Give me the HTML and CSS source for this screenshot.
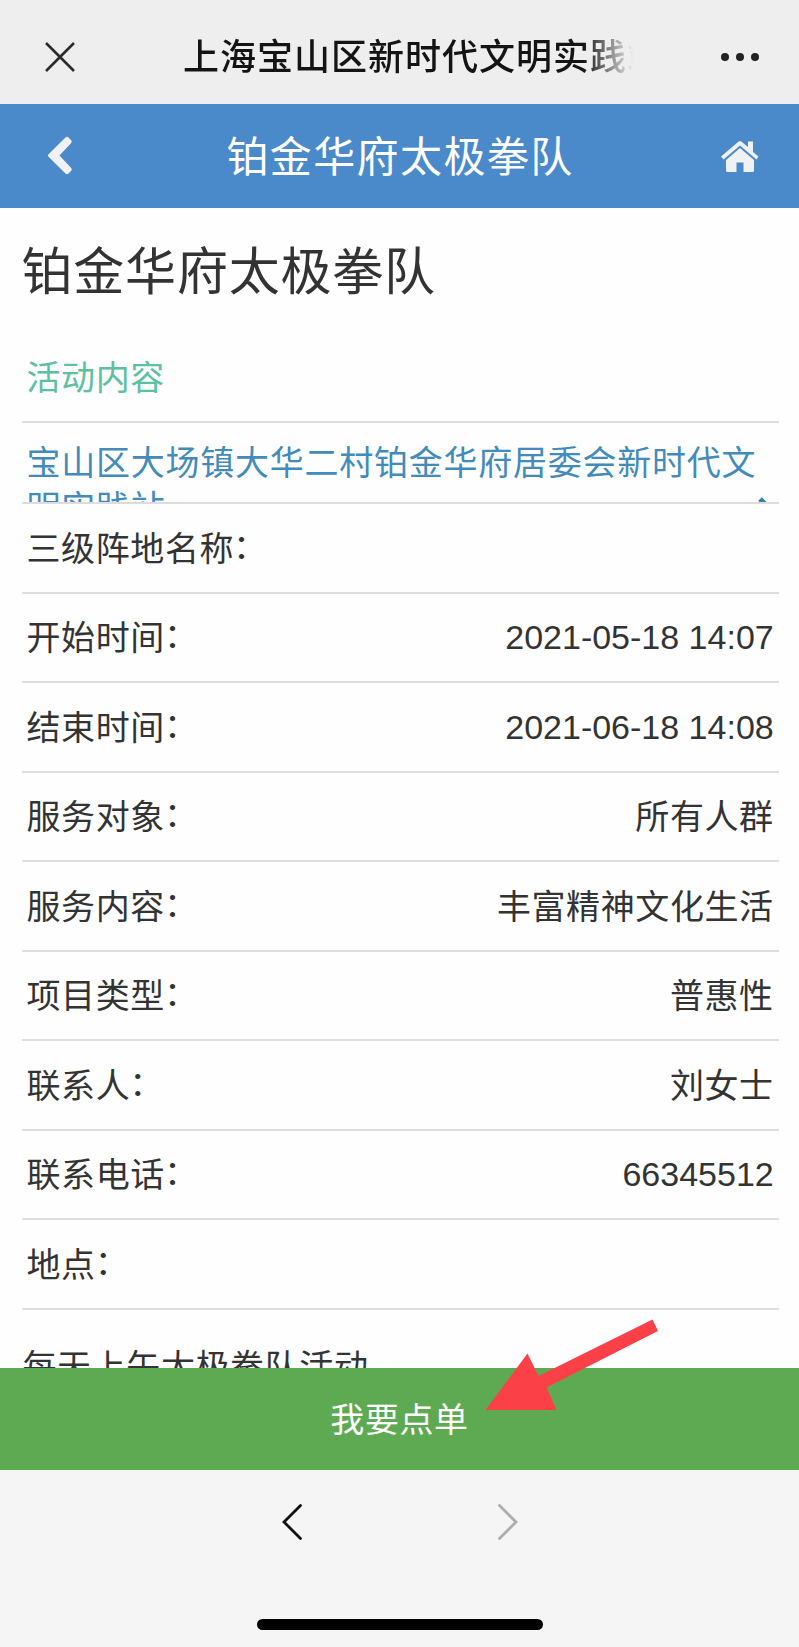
FILE: index.html
```html
<!DOCTYPE html>
<html lang="zh-CN">
<head>
  <meta charset="UTF-8">
  <meta name="viewport" content="width=device-width, initial-scale=1.0">
  <title>铂金华府太极拳队</title>
  <link rel="stylesheet" href="styles.css">
</head>
<body>
  <div class="browser-bar">
    <svg class="close-icon" width="32" height="32" viewBox="0 0 32 32">
      <path d="M2 2 L30 30 M30 2 L2 30"></path>
    </svg>
    <div class="browser-title">上海宝山区新时代文明实践站</div>
    <svg class="more-icon" width="40" height="10" viewBox="0 0 40 10">
      <circle cx="5" cy="5" r="4"></circle>
      <circle cx="20" cy="5" r="4"></circle>
      <circle cx="35" cy="5" r="4"></circle>
    </svg>
  </div>

  <header class="header">
    <svg class="back-icon" width="26" height="40" viewBox="0 0 26 40">
      <path d="M18.500 1.500 Q20 0 21.500 1.500 L24.200 4.200 Q25.500 5.500 24.200 7 L12.500 19.500 L24.200 32 Q25.500 33.500 24.200 34.800 L21.500 37.500 Q20 39 18.500 37.500 L1.500 20.800 Q0.300 19.500 1.500 18.200 Z"></path>
    </svg>
    <div class="header-title">铂金华府太极拳队</div>
    <svg class="home-icon" width="40" height="34" viewBox="0 0 40 34">
      <path d="M28 1.5 H33 V12 L38.5 16.5 L36.5 19.5 L20 5.5 L3.500 19.500 L1 16.500 L17.500 2.500 Q20 0 22.500 2.500 L28 7 Z"></path>
      <path d="M20 8 L34 20 V30.500 Q34 32 32.500 32 H23.500 V22.500 H16.500 V32 H7.500 Q6 32 6 30.500 V20 Z"></path>
    </svg>
  </header>

  <main class="content">
    <h1>铂金华府太极拳队</h1>
    <h2>活动内容</h2>
    <a class="station" href="#">
      <span class="station-name">宝山区大场镇大华二村铂金华府居委会新时代文明实践站</span>
      <svg class="station-icon" width="18" height="26" viewBox="0 0 18 26">
        <path d="M3 3 L13 13 L3 23"></path>
      </svg>
    </a>
    <div class="row"><span>三级阵地名称<i class="colon">：</i></span></div>
    <div class="row"><span>开始时间<i class="colon">：</i></span><span class="number">2021-05-18 14:07</span></div>
    <div class="row"><span>结束时间<i class="colon">：</i></span><span class="number">2021-06-18 14:08</span></div>
    <div class="row"><span>服务对象<i class="colon">：</i></span><span>所有人群</span></div>
    <div class="row"><span>服务内容<i class="colon">：</i></span><span>丰富精神文化生活</span></div>
    <div class="row"><span>项目类型<i class="colon">：</i></span><span>普惠性</span></div>
    <div class="row"><span>联系人<i class="colon">：</i></span><span>刘女士</span></div>
    <div class="row"><span>联系电话<i class="colon">：</i></span><span class="number">66345512</span></div>
    <div class="row"><span>地点<i class="colon">：</i></span></div>
    <p class="description">每天上午太极拳队活动</p>
  </main>

  <div class="order">
    <button class="order-btn">我要点单</button>
    <svg class="arrow" width="176" height="94" viewBox="0 0 176 94">
      <path d="M0.500 92 L42.500 35.500 L53.500 58 L167.500 1.500 L173 13 L61.500 69.500 L71.500 92 Z"></path>
    </svg>
  </div>

  <footer class="toolbar">
    <div class="nav">
      <svg width="22" height="38" viewBox="0 0 22 38">
        <path d="M19.500 2.500 L3 19 L19.500 35.500"></path>
      </svg>
      <svg class="disabled" width="22" height="38" viewBox="0 0 22 38">
        <path d="M2.500 2.500 L19 19 L2.500 35.500"></path>
      </svg>
    </div>
    <div class="home-indicator"></div>
  </footer>
</body>
</html>
```
FILE: styles.css
```css
* {
  box-sizing: border-box;
}

body {
  font-family: "Liberation Sans", "Noto Sans CJK SC", sans-serif;
  margin: 0;
  height: 1647px;
  display: flex;
  flex-direction: column;
  overflow: hidden;
  background-color: #fefefe;
  color: #333;
  font-size: 34px;
  letter-spacing: 0.6px;
}

/* browser bar */
.browser-bar {
  flex: none;
  height: 103.5px;
  padding: 10px 39px 0 44px;
  display: flex;
  align-items: center;
  background-color: #eeeeee;
}

.close-icon {
  fill: none;
  stroke: #2b2b2b;
  stroke-width: 2.6;
}

.browser-title {
  width: 450px;
  margin-left: 107px;
  padding-top: 3px;
  overflow: hidden;
  white-space: nowrap;
  color: #141414;
  font-size: 36px;
  font-weight: 500;
  line-height: 50px;
  letter-spacing: 1px;
  -webkit-mask-image: linear-gradient(to right, #000 400px, transparent 450px);
  mask-image: linear-gradient(to right, #000 400px, transparent 450px);
}

.more-icon {
  margin-left: auto;
  fill: #222;
}

/* page header */
.header {
  flex: none;
  height: 104.5px;
  padding: 0 39px 0 47px;
  display: flex;
  align-items: center;
  justify-content: space-between;
  background-color: #4a89ca;
}

.back-icon {
  fill: #f0f1f5;
}

.header-title {
  padding-top: 5px;
  color: #fff;
  font-size: 42px;
  font-weight: 400;
  line-height: 60px;
  letter-spacing: 1.4px;
  margin-left: 7px;
}

.home-icon {
  margin-top: 2px;
  fill: #f0f1f5;
}

/* details */
.content {
  flex: none;
  height: 1159.7px;
  padding: 0 20.3px 0 21.5px;
  overflow: hidden;
}

h1 {
  margin: 30px 0 0;
  font-size: 51px;
  font-weight: normal;
  line-height: 70px;
  letter-spacing: 0.8px;
}

h2 {
  margin: 25px 0 0;
  padding: 23px 5px 0;
  height: 90px;
  border-bottom: 2px solid #ddd;
  color: #5bc1a0;
  font-size: 34px;
  font-weight: normal;
  line-height: 45px;
}

.station {
  display: flex;
  height: 81px;
  padding: 18px 5px 0;
  overflow: hidden;
  border-bottom: 2px solid #ddd;
  color: #428bbb;
  line-height: 45px;
  letter-spacing: 0.75px;
  text-decoration: none;
}

.station-name {
  flex: none;
  width: 732px;
}

.station-icon {
  flex: none;
  margin: 55px 0 0 -2px;
  fill: none;
  stroke: #2f83ad;
  stroke-width: 5;
}

.row {
  display: flex;
  justify-content: space-between;
  align-items: center;
  height: 89.5px;
  padding: 3px 5px 0;
  border-bottom: 2px solid #ddd;
  line-height: 45px;
}

.colon {
  margin-left: -1px;
  font-style: normal;
  line-height: 1;
  vertical-align: 2px;
}

.number {
  margin-top: -2px;
  letter-spacing: 0;
}

.description {
  margin: 35px 0 0 1px;
  line-height: 45px;
}

/* order button */
.order {
  position: relative;
  flex: none;
  height: 102.3px;
}

.order-btn {
  display: block;
  width: 100%;
  height: 100%;
  padding: 0 0 2px;
  border: none;
  background-color: #5eaa52;
  color: #fff;
  font-family: inherit;
  font-size: 34px;
  letter-spacing: 0.6px;
}

.arrow {
  position: absolute;
  left: 485px;
  top: -50px;
  fill: #fc4047;
}

/* bottom toolbar */
.toolbar {
  flex: 1;
  display: flex;
  flex-direction: column;
  justify-content: space-between;
  align-items: center;
  padding: 33px 0 17px 1px;
  background-color: #f5f5f5;
}

.nav {
  display: flex;
  gap: 194px;
  fill: none;
  stroke: #111;
  stroke-width: 2.8;
  stroke-linecap: round;
}

.disabled {
  stroke: #adadad;
}

.home-indicator {
  width: 286px;
  height: 11px;
  border-radius: 6px;
  background-color: #000;
}
```
